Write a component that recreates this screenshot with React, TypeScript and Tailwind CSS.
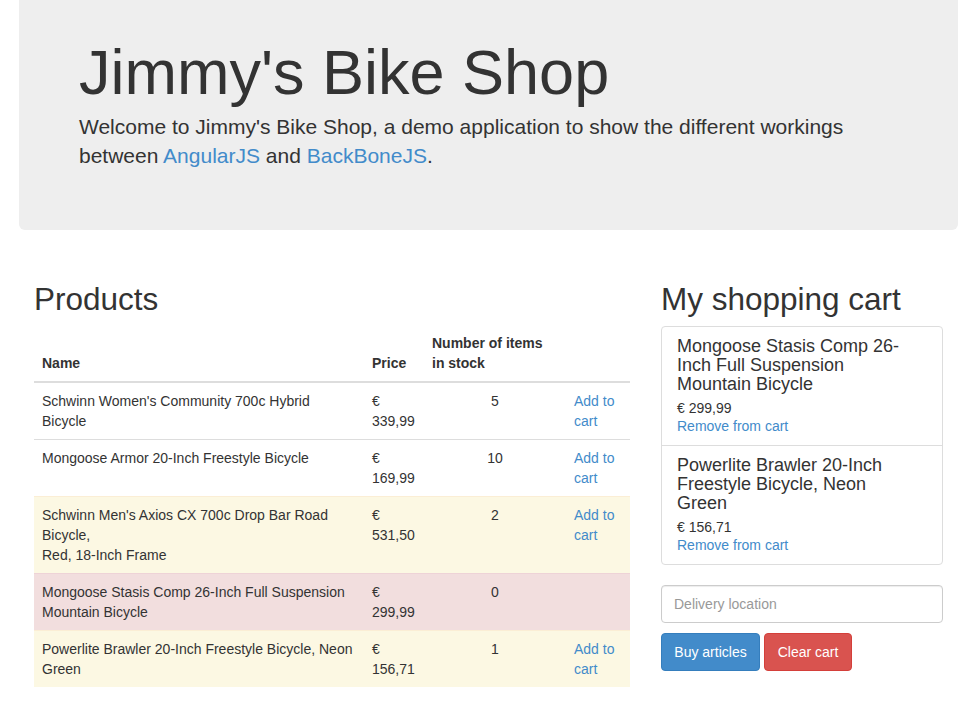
import React from "react";

type Row = { name: React.ReactNode; price: string; stock: number; bg: string; border: string; canAdd: boolean };

const rows: Row[] = [
  { name: "Schwinn Women's Community 700c Hybrid Bicycle", price: "339,99", stock: 5, bg: "", border: "border-[#dddddd]", canAdd: true },
  { name: "Mongoose Armor 20-Inch Freestyle Bicycle", price: "169,99", stock: 10, bg: "", border: "border-[#dddddd]", canAdd: true },
  {
    name: (
      <>
        Schwinn Men's Axios CX 700c Drop Bar Road Bicycle,
        <br />
        Red, 18-Inch Frame
      </>
    ),
    price: "531,50",
    stock: 2,
    bg: "bg-[#fcf8e3]",
    border: "border-[#fbeed5]",
    canAdd: true,
  },
  { name: "Mongoose Stasis Comp 26-Inch Full Suspension Mountain Bicycle", price: "299,99", stock: 0, bg: "bg-[#f2dede]", border: "border-[#eed3d7]", canAdd: false },
  { name: "Powerlite Brawler 20-Inch Freestyle Bicycle, Neon Green", price: "156,71", stock: 1, bg: "bg-[#fcf8e3]", border: "border-[#fbeed5]", canAdd: true },
];

const cart = [
  { name: "Mongoose Stasis Comp 26-Inch Full Suspension Mountain Bicycle", price: "299,99" },
  { name: "Powerlite Brawler 20-Inch Freestyle Bicycle, Neon Green", price: "156,71" },
];

export default function App() {
  return (
    <div className="font-['Liberation_Sans',Arial,sans-serif] text-[14px] leading-[20px] text-[#333333] bg-white min-h-[713px]">
      <div className="ml-[19px] w-[939px] h-[230px] bg-[#eeeeee] rounded-b-[6px] px-[60px] pt-[38px]">
        <h1 className="text-[63px] leading-[69px] font-normal text-[#333333]">Jimmy's Bike Shop</h1>
        <p className="mt-[5px] text-[21px] leading-[29px]">
          Welcome to Jimmy's Bike Shop, a demo application to show the different workings between{" "}
          <a className="text-[#428bca]" href="#">AngularJS</a> and{" "}
          <a className="text-[#428bca]" href="#">BackBoneJS</a>.
        </p>
      </div>

      <div className="ml-[34px] mt-[33px] flex gap-[31px] w-[909px]">
        <div className="w-[596px]">
          <h2 className="mt-[20px] mb-[9px] text-[31.5px] leading-[33px] font-normal">Products</h2>
          <table className="w-[596px] table-fixed border-collapse">
            <thead>
              <tr>
                <th className="w-[330px] p-[8px] text-left align-bottom font-bold border-b-2 border-[#dddddd]">Name</th>
                <th className="w-[60px] p-[8px] text-left align-bottom font-bold border-b-2 border-[#dddddd]">Price</th>
                <th className="w-[142px] p-[8px] text-left align-bottom font-bold border-b-2 border-[#dddddd]">Number of items in stock</th>
                <th className="w-[64px] p-[8px] text-left align-bottom font-bold border-b-2 border-[#dddddd]"></th>
              </tr>
            </thead>
            <tbody>
              {rows.map((r, i) => (
                <tr key={i} className={r.bg}>
                  <td className={`p-[8px] align-top border-t ${r.border}`}>{r.name}</td>
                  <td className={`p-[8px] align-top border-t ${r.border}`}>€ {r.price}</td>
                  <td className={`p-[8px] align-top text-center border-t ${r.border}`}>{r.stock}</td>
                  <td className={`p-[8px] align-top border-t ${r.border}`}>
                    {r.canAdd ? <a className="text-[#428bca]" href="#">Add to cart</a> : null}
                  </td>
                </tr>
              ))}
            </tbody>
          </table>
        </div>

        <div className="w-[282px]">
          <h2 className="mt-[20px] mb-[10px] text-[31.5px] leading-[33px] font-normal whitespace-nowrap">My shopping cart</h2>
          <div className="border border-[#dddddd] rounded-[4px]">
            {cart.map((c, i) => (
              <div key={i} className={`px-[15px] py-[10px] ${i > 0 ? "border-t border-[#dddddd]" : ""}`}>
                <h4 className="w-[230px] text-[18px] leading-[19px] font-normal mb-[5px]">{c.name}</h4>
                <p className="leading-[18px]">€ {c.price}</p>
                <p className="leading-[18px]">
                  <a className="text-[#428bca]" href="#">Remove from cart</a>
                </p>
              </div>
            ))}
          </div>
          <input
            className="mt-[20px] block w-full h-[38px] border border-[#cccccc] rounded-[4px] px-[12px] text-[14px] text-[#555555] placeholder:text-[#999999] outline-none shadow-[inset_0_1px_1px_rgba(0,0,0,0.075)]"
            placeholder="Delivery location"
          />
          <div className="mt-[10px] flex gap-[4px]">
            <button className="h-[38px] w-[99px] rounded-[4px] bg-[#428bca] border border-[#357ebd] text-white text-[14px]">Buy articles</button>
            <button className="h-[38px] w-[88px] rounded-[4px] bg-[#d9534f] border border-[#d43f3a] text-white text-[14px]">Clear cart</button>
          </div>
        </div>
      </div>
    </div>
  );
}
